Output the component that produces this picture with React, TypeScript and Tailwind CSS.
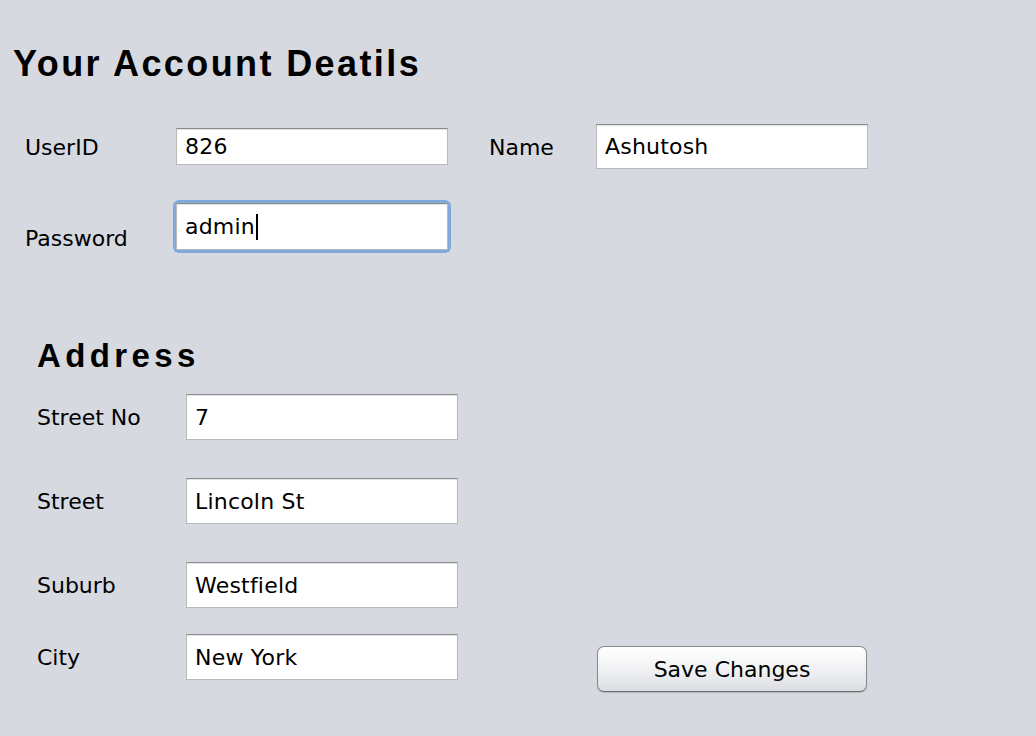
import React from 'react';

const font = { fontFamily: '"DejaVu Sans", "Liberation Sans", sans-serif' };

const Field = ({ value, className = '', caret = false }: { value: string; className?: string; caret?: boolean }) => (
    <div className={`flex items-center bg-white border border-[#b9b9b9] border-t-[#8c8c8c] shadow-[inset_0_1px_1px_rgba(0,0,0,0.12)] pl-[8px] text-[22px] text-black ${className}`}>
        <span className="tracking-[0.2px]">{value}</span>
        {caret && <span className="inline-block w-[2px] h-[26px] bg-black ml-[1px]" />}
    </div>
);

const Label = ({ text, className = '' }: { text: string; className?: string }) => (
    <span className={`text-[22px] text-black leading-none ${className}`}>{text}</span>
);

const AddressRow = ({ label, value, className = '' }: { label: string; value: string; className?: string }) => (
    <div className={`flex items-center ${className}`}>
        <Label text={label} className="w-[149px] mt-[2px]" />
        <Field value={value} className="w-[272px] h-[46px]" />
    </div>
);

const App = () => {
    return (
        <div style={font} className="w-[1036px] h-[736px] bg-[#d6d9e0] overflow-hidden">
            <h1
                style={{ fontFamily: '"Liberation Sans", Arial, sans-serif' }}
                className="pl-[13px] pt-[45px] text-[36px] font-bold leading-[38px] tracking-[2.4px] text-black"
            >
                Your Account Deatils
            </h1>

            <div className="flex items-center mt-[41px] pl-[25px] h-[45px]">
                <Label text="UserID" className="w-[151px] mt-[3px]" />
                <Field value="826" className="w-[272px] h-[37px]" />
                <Label text="Name" className="ml-[41px] w-[107px] mt-[3px]" />
                <Field value="Ashutosh" className="w-[272px] h-[45px]" />
            </div>

            <div className="flex items-start mt-[31px] pl-[25px]">
                <Label text="Password" className="w-[148px] mt-[28px]" />
                <div className="rounded-[3px] ring-[3px] ring-[#7ea9da] ml-[3px] mt-[3px]">
                    <Field value="admin" caret className="w-[272px] h-[47px] border-[#6f8fb6]" />
                </div>
            </div>

            <div className="pl-[37px]">
                <h2
                    style={{ fontFamily: '"Liberation Sans", Arial, sans-serif' }}
                    className="mt-[89px] text-[33px] font-bold leading-[34px] tracking-[4.4px] text-black"
                >
                    Address
                </h2>
                <AddressRow label="Street No" value="7" className="mt-[21px]" />
                <AddressRow label="Street" value="Lincoln St" className="mt-[38px]" />
                <AddressRow label="Suburb" value="Westfield" className="mt-[38px]" />
                <div className="flex items-start mt-[26px]">
                    <div className="flex items-center h-[46px]">
                        <Label text="City" className="w-[149px] mt-[2px]" />
                        <Field value="New York" className="w-[272px] h-[46px]" />
                    </div>
                    <button className="ml-[139px] mt-[12px] w-[270px] h-[46px] rounded-[7px] border border-[#8a8a8a] border-b-[#6e6e6e] bg-gradient-to-b from-white via-[#f1f2f4] to-[#dcdee3] shadow-[0_1px_1px_rgba(0,0,0,0.15)] text-[22px] text-black">
                        Save Changes
                    </button>
                </div>
            </div>
        </div>
    );
};

export default App;
